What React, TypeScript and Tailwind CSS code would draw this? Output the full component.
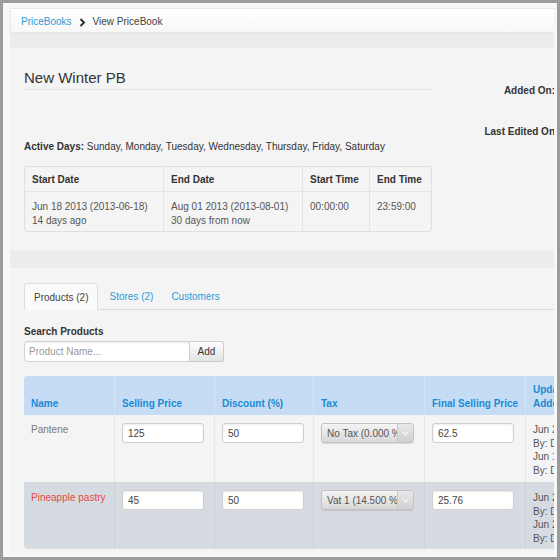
import React from "react";

function Chevron() {
  return (
    <svg width="7" height="9" viewBox="0 0 7 9" className="mx-[7px]">
      <path d="M1.5 1 L5 4.5 L1.5 8" stroke="#333" strokeWidth="2" fill="none" />
    </svg>
  );
}

function TextInput({ value }: { value: string }) {
  return (
    <div className="w-[82px] h-[20px] bg-white border border-[#cfcfcf] rounded-[3px] shadow-[inset_0_1px_2px_rgba(0,0,0,0.08)] flex items-center pl-[5px] pt-[1px] text-[#444]">
      {value}
    </div>
  );
}

function Select({ value }: { value: string }) {
  return (
    <div className="w-[93px] h-[20px] rounded-[3px] border border-[#c2c2c2] bg-linear-to-b from-[#f4f4f4] to-[#d8d8d8] flex items-center text-[#555] shadow-[0_1px_1px_rgba(0,0,0,0.1)]">
      <span className="flex-1 overflow-hidden whitespace-nowrap pl-[5px] pt-[1px]">{value}</span>
      <span className="w-[16px] h-full border-l border-[#c9c9c9] flex items-center justify-center bg-linear-to-b from-[#e8e8e8] to-[#d0d0d0] rounded-r-[3px]">
        <svg width="7" height="5" viewBox="0 0 7 5">
          <path d="M0.5 0.5 L3.5 4 L6.5 0.5" stroke="#f5f5f5" strokeWidth="1.2" fill="none" />
        </svg>
      </span>
    </div>
  );
}

export default function App() {
  const dates = [
    { h: "Start Date", l1: "Jun 18 2013 (2013-06-18)", l2: "14 days ago" },
    { h: "End Date", l1: "Aug 01 2013 (2013-08-01)", l2: "30 days from now" },
    { h: "Start Time", l1: "00:00:00", l2: "" },
    { h: "End Time", l1: "23:59:00", l2: "" },
  ];
  const rows = [
    {
      name: "Pantene",
      nameCls: "text-[#7a7a7a] pt-[8px]",
      updCls: "pt-[8px]",
      bg: "bg-[#f4f4f4]",
      div: "border-[#e6e6e6]",
      sp: "125",
      disc: "50",
      tax: "No Tax (0.000 %)",
      fin: "62.5",
      upd: ["Jun 28 2013", "By: Demo", "Jun 18 2013", "By: Demo"],
    },
    {
      name: "Pineapple pastry",
      nameCls: "text-[#e8473f] pt-[9px]",
      updCls: "pt-[9px]",
      bg: "bg-[#d6dbe2]",
      div: "border-[#ccd1d8]",
      sp: "45",
      disc: "50",
      tax: "Vat 1 (14.500 %)",
      fin: "25.76",
      upd: ["Jun 28 2013", "By: Demo", "Jun 28 2013", "By: Demo"],
    },
  ];
  return (
    <div className="w-[560px] h-[560px] bg-[#9c9c9c] p-[3px] font-['Liberation_Sans',Arial,sans-serif] text-[10px] leading-[14px] text-[#333]">
      <div className="w-full h-full bg-[#f7f7f7] pt-[5px] pl-[7px] pr-[3px] pb-[4px]">
        <div className="w-full h-full overflow-hidden">
          <div className="w-[720px]">
            {/* breadcrumb */}
            <div className="h-[25px] flex items-center pl-[10px] pt-[3px] bg-linear-to-b from-white to-[#f7f7f7] border border-[#e6e6e6]">
              <span className="text-[#2b9bd6]">PriceBooks</span>
              <Chevron />
              <span className="text-[#444]">View PriceBook</span>
            </div>
            <div className="h-[15px] bg-[#ececec]" />
            {/* panel 1 */}
            <div className="h-[202px] bg-[#f4f4f4] pl-[14px] flex">
              <div className="w-[408px] flex flex-col">
                <div className="pt-[20px] pb-[1px] border-b border-[#e2e2e2] text-[15px] leading-[20px] text-[#333]">
                  New Winter PB
                </div>
                <div className="mt-[50px]">
                  <span className="font-bold">Active Days:</span> Sunday, Monday, Tuesday, Wednesday, Thursday, Friday, Saturday
                </div>
                <div className="mt-[12px] w-[408px] border border-[#e0e0e0] rounded-[3px] grid grid-cols-[138px_139px_67px_62px]">
                  {dates.map((d, i) => (
                    <div
                      key={d.h}
                      className={`h-[25px] px-[7px] pt-[2px] flex items-center font-bold border-b border-[#e3e3e3] ${i > 0 ? "border-l" : ""}`}
                    >
                      {d.h}
                    </div>
                  ))}
                  {dates.map((d, i) => (
                    <div
                      key={d.h + "v"}
                      className={`h-[39px] px-[7px] pt-[8px] text-[#555] border-[#e3e3e3] ${i > 0 ? "border-l" : ""}`}
                    >
                      <div>{d.l1}</div>
                      {d.l2 && <div>{d.l2}</div>}
                    </div>
                  ))}
                </div>
              </div>
              <div className="w-[123px] flex flex-col items-end font-bold text-[#333] pt-[36px]">
                <div className="whitespace-nowrap">Added On:</div>
                <div className="mt-[27px] whitespace-nowrap">Last Edited On</div>
              </div>
            </div>
            <div className="h-[18px] bg-[#ececec]" />
            {/* panel 2 */}
            <div className="h-[300px] bg-[#f4f4f4] pl-[14px] pt-[16px]">
              <div className="flex items-end h-[26px] border-b border-[#dddddd]">
                <div className="h-[27px] mb-[-1px] border border-[#dddddd] border-b-[#fafafa] rounded-t-[4px] bg-[#fafafa] px-[9px] pt-[2px] flex items-center text-[#444]">
                  Products (2)
                </div>
                <div className="h-[26px] pl-[11px] pr-[9px] pt-[2px] flex items-center text-[#2b9bd6]">Stores (2)</div>
                <div className="h-[26px] pl-[9px] pt-[2px] flex items-center text-[#2b9bd6]">Customers</div>
              </div>
              <div className="mt-[15px] font-bold">Search Products</div>
              <div className="mt-[2px] flex h-[21px]">
                <div className="w-[166px] h-full bg-white border border-[#d3d3d3] rounded-l-[3px] shadow-[inset_0_1px_2px_rgba(0,0,0,0.08)] flex items-center pl-[4px] pt-[1px] text-[#9a9a9a]">
                  Product Name...
                </div>
                <div className="w-[34px] h-full border border-l-0 border-[#cccccc] rounded-r-[3px] bg-linear-to-b from-[#fdfdfd] to-[#e4e4e4] flex items-center justify-center pt-[1px] text-[#333]">
                  Add
                </div>
              </div>
              <div className="mt-[14px] w-[640px] rounded-[4px] overflow-hidden">
                <div className="grid grid-cols-[90px_100px_99px_111px_101px_139px] bg-[#c5dcf4] h-[39px] font-bold text-[#1b8ad3]">
                  <div className="px-[7px] pb-[4px] flex items-end">Name</div>
                  <div className="px-[7px] pb-[4px] flex items-end border-l border-[#d6e5f6]">Selling Price</div>
                  <div className="px-[7px] pb-[4px] flex items-end border-l border-[#d6e5f6]">Discount (%)</div>
                  <div className="px-[7px] pb-[4px] flex items-end border-l border-[#d6e5f6]">Tax</div>
                  <div className="px-[7px] pb-[4px] flex items-end border-l border-[#d6e5f6] whitespace-nowrap">Final Selling Price</div>
                  <div className="px-[7px] pb-[4px] flex flex-col justify-end border-l border-[#d6e5f6]">
                    <div>Updated On</div>
                    <div>Added On</div>
                  </div>
                </div>
                {rows.map((r) => (
                  <div key={r.name} className={`grid grid-cols-[90px_100px_99px_111px_101px_139px] h-[67px] ${r.bg}`}>
                    <div className={`px-[7px] ${r.nameCls}`}>{r.name}</div>
                    <div className={`px-[7px] pt-[8px] border-l ${r.div}`}>
                      <TextInput value={r.sp} />
                    </div>
                    <div className={`px-[7px] pt-[8px] border-l ${r.div}`}>
                      <TextInput value={r.disc} />
                    </div>
                    <div className={`px-[7px] pt-[8px] border-l ${r.div}`}>
                      <Select value={r.tax} />
                    </div>
                    <div className={`px-[7px] pt-[8px] border-l ${r.div}`}>
                      <TextInput value={r.fin} />
                    </div>
                    <div className={`px-[7px] ${r.updCls} border-l ${r.div} text-[#555] leading-[13.5px]`}>
                      {r.upd.map((u, i) => (
                        <div key={i} className="whitespace-nowrap">{u}</div>
                      ))}
                    </div>
                  </div>
                ))}
              </div>
            </div>
          </div>
        </div>
      </div>
    </div>
  );
}
